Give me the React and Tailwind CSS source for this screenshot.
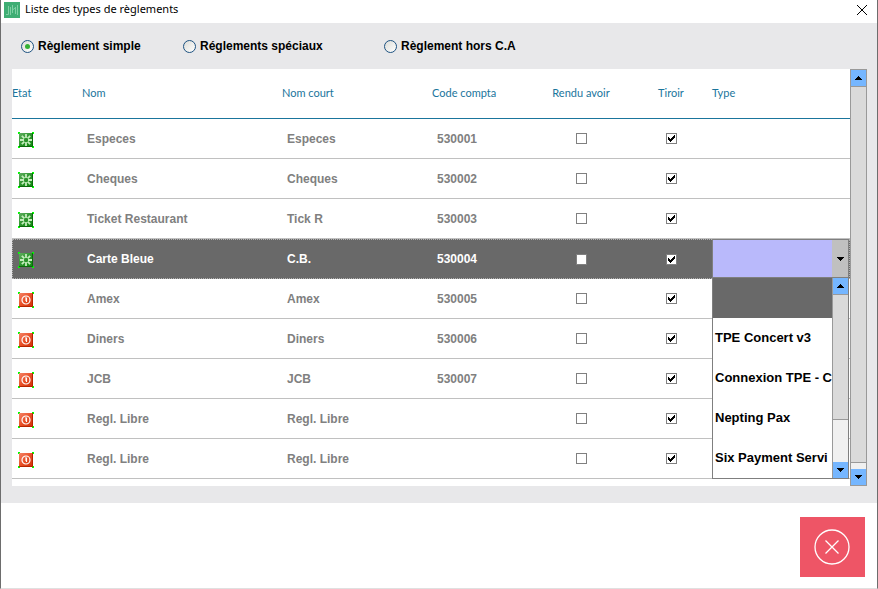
import React from "react";

const rows = [
  { on: true, name: "Especes", short: "Especes", code: "530001" },
  { on: true, name: "Cheques", short: "Cheques", code: "530002" },
  { on: true, name: "Ticket Restaurant", short: "Tick R", code: "530003" },
  { on: true, name: "Carte Bleue", short: "C.B.", code: "530004", selected: true },
  { on: false, name: "Amex", short: "Amex", code: "530005" },
  { on: false, name: "Diners", short: "Diners", code: "530006" },
  { on: false, name: "JCB", short: "JCB", code: "530007" },
  { on: false, name: "Regl. Libre", short: "Regl. Libre", code: "" },
  { on: false, name: "Regl. Libre", short: "Regl. Libre", code: "" },
];

const terminals = ["", "TPE Concert v3", "Connexion TPE - C", "Nepting Pax", "Six Payment Servi"];

function StateIcon({ on }) {
  return (
    <svg width="16" height="16" viewBox="0 0 16 16" role="img" aria-label={on ? "Actif" : "Inactif"} className="ml-1.5 mt-0.5 block">
      <defs>
        <linearGradient id="stateOn" x1="0" y1="0" x2="1" y2="1">
          <stop offset="0" stopColor="#5fae5f" />
          <stop offset="0.5" stopColor="#2c932c" />
          <stop offset="1" stopColor="#0e8a0e" />
        </linearGradient>
        <linearGradient id="stateOff" x1="0" y1="0" x2="1" y2="1">
          <stop offset="0" stopColor="#f58468" />
          <stop offset="0.5" stopColor="#e84e26" />
          <stop offset="1" stopColor="#cc2e05" />
        </linearGradient>
      </defs>
      <rect x="1" y="1" width="14" height="14" fill={on ? "url(#stateOn)" : "url(#stateOff)"} />
      <path d="M1 14.5H14.5V1" fill="none" stroke={on ? "#0a6b0a" : "#b82600"} />
      {on ? (
        <g stroke="#c4ecbc" strokeWidth="1.8">
          <path d="M8 2V6M8 10V14M2 8H6M10 8H14M3.800 3.800L6.400 6.400M9.600 9.600L12.200 12.200M12.200 3.800L9.600 6.400M6.400 9.600L3.800 12.200" />
        </g>
      ) : (
        <g fill="none" stroke="#fff">
          <circle cx="8" cy="8" r="4" strokeWidth="1.2" />
          <path d="M7 6H8.500V10M7 8H8.500" strokeWidth="1.2" />
        </g>
      )}
      <path
        d="M0 0H2V1H1V2H0ZM14 0H16V2H15V1H14ZM0 14H1V15H2V16H0ZM15 14H16V16H14V15H15Z"
        fill="#00ff00"
        shapeRendering="crispEdges"
      />
    </svg>
  );
}

function Tick({ label, checked }) {
  return (
    <span className="relative mx-auto block size-[11px]">
      <input
        type="checkbox"
        aria-label={label}
        defaultChecked={checked}
        className="peer block size-[11px] appearance-none border border-[#808080] bg-white"
      />
      <svg viewBox="0 0 11 11" shapeRendering="crispEdges" className="pointer-events-none absolute inset-0 hidden size-[11px] peer-checked:block">
        <path d="M2 4H3V5H4V6H5V5H6V4H7V3H8V2H9V5H8V6H7V7H6V8H5V9H4V8H3V7H2Z" fill="#000" />
      </svg>
    </span>
  );
}

function Arrow({ down }) {
  return (
    <svg width="7" height="4" viewBox="0 0 7 4" shapeRendering="crispEdges" aria-hidden="true">
      <path d={down ? "M0 0H7V1H6V2H5V3H4V4H3V3H2V2H1V1H0Z" : "M3 0H4V1H5V2H6V3H7V4H0V3H1V2H2V1H3Z"} fill="#000" />
    </svg>
  );
}

function Radio({ label, checked, className }) {
  return (
    <label className={"flex items-center gap-1 whitespace-nowrap " + className}>
      <input
        type="radio"
        name="category"
        defaultChecked={checked}
        className="grid size-[13px] shrink-0 appearance-none place-items-center rounded-full border border-[#1d5281] bg-linear-to-br from-[#dcdcd7] to-white before:hidden before:size-[5px] before:rounded-full before:bg-[#34b034] checked:before:block"
      />
      {label}
    </label>
  );
}

function TypePicker() {
  return (
    <div className="relative z-10 h-[39px] w-[137px] border border-[#7f7f7f]">
      <select aria-label="Type" className="block h-full w-full appearance-none bg-[#b9b9fb]">
        {terminals.map((t) => (
          <option key={t}>{t}</option>
        ))}
      </select>
      <span className="pointer-events-none absolute inset-y-0 right-0 flex w-4 items-center justify-center bg-[#c0c0c0]">
        <Arrow down />
      </span>
      <div className="absolute -left-px top-full z-10 flex h-[202px] w-[137px] border border-[#7f7f7f] bg-white text-[13px] text-black">
        <ul role="listbox" aria-label="Type" className="min-w-0 flex-1 overflow-hidden">
          {terminals.map((t, i) => (
            <li
              key={t}
              role="option"
              aria-selected={i === 0}
              className="flex h-10 items-center whitespace-nowrap pl-0.5 aria-selected:bg-[#696969]"
            >
              {t}
            </li>
          ))}
        </ul>
        <div className="flex w-4 flex-col border-l border-[#999] bg-[#f0f0f0]">
          <button aria-label="Monter" className="flex h-4 shrink-0 items-center justify-center bg-[#75b6ff]">
            <Arrow />
          </button>
          <div className="h-[126px] border-y border-[#999] bg-[#dadada]" />
          <div className="flex-1" />
          <button aria-label="Descendre" className="flex h-4 shrink-0 items-center justify-center bg-[#75b6ff]">
            <Arrow down />
          </button>
        </div>
      </div>
    </div>
  );
}

export default function App() {
  return (
    <div className="flex min-h-screen flex-col border-x border-b border-x-[#6d6d6d] border-b-[#e0e0e0] bg-white font-['Liberation_Sans',Arial,sans-serif]">
      <header className="flex h-[23px] items-center pl-[3px] pr-[9px] pb-1">
        <svg width="16" height="16" viewBox="0 0 16 16" aria-hidden="true" className="mt-px">
          <rect width="16" height="16" fill="#3fae74" />
          <path d="M2 12.5H4.5V4M6.5 13V5M8.500 11V3M8.500 8L11 6M11.500 12V5M13.500 13V3" fill="none" stroke="#7fd0a4" />
        </svg>
        <h1 className="ml-[5px] flex-1 font-['Noto_Sans',sans-serif] text-[11px] text-black">Liste des types de règlements</h1>
        <button aria-label="Fermer">
          <svg width="12" height="12" viewBox="0 0 12 12" stroke="#000">
            <path d="M1 1L11 11M11 1L1 11" />
          </svg>
        </button>
      </header>

      <main className="bg-[#e8e8ea] pb-[17px] pl-[11px] pr-2.5">
        <fieldset className="flex h-[46px] items-center pl-[9px] text-[12px] font-bold text-black">
          <Radio label="Règlement simple" checked className="w-[162px]" />
          <Radio label="Réglements spéciaux" className="w-[201px]" />
          <Radio label="Règlement hors C.A" className="" />
        </fieldset>

        <div className="flex">
          <div className="min-w-0 flex-1 bg-white pb-[7px]">
            <table className="w-full table-fixed border-separate border-spacing-0 text-left text-[12px] font-bold text-[#808080]">
              <colgroup>
                <col className="w-[70px]" />
                <col className="w-[200px]" />
                <col className="w-[150px]" />
                <col className="w-[99px]" />
                <col className="w-[100px]" />
                <col className="w-20" />
                <col />
              </colgroup>
              <thead>
                <tr className="h-[50px] font-['Lato',sans-serif] text-[11px] text-[#1a759c] *:border-b *:border-[#1a759c] *:p-0 *:font-normal">
                  <th>Etat</th>
                  <th>Nom</th>
                  <th>Nom court</th>
                  <th>Code compta</th>
                  <th className="text-center">Rendu avoir</th>
                  <th className="text-center">Tiroir</th>
                  <th className="pl-px!">Type</th>
                </tr>
              </thead>
              <tbody>
                {rows.map((r, i) => (
                  <tr
                    key={i}
                    className={
                      r.selected
                        ? "h-10 bg-[#696969] text-white outline-1 -outline-offset-1 outline-dotted outline-[#b0b0b0] *:p-0"
                        : "h-10 *:border-b *:border-[#c0c0c0] *:p-0"
                    }
                  >
                    <td>
                      <StateIcon on={r.on} />
                    </td>
                    <td>
                      <span className="pl-[5px]">{r.name}</span>
                    </td>
                    <td>
                      <span className="pl-[5px]">{r.short}</span>
                    </td>
                    <td>
                      <span className="pl-[5px]">{r.code}</span>
                    </td>
                    <td>
                      <Tick label={"Rendu avoir " + r.name} />
                    </td>
                    <td>
                      <Tick label={"Tiroir " + r.name} checked />
                    </td>
                    <td className="pl-px! align-top">{r.selected && <TypePicker />}</td>
                  </tr>
                ))}
              </tbody>
            </table>
          </div>
          <div className="flex w-[17px] flex-col border border-[#999] bg-[#f0f0f0]">
            <button aria-label="Défiler vers le haut" className="flex h-4 shrink-0 items-center justify-center bg-[#75b6ff]">
              <Arrow />
            </button>
            <div className="flex-1 border-y border-[#999] bg-[#dadada]" />
            <div className="h-1.5" />
            <button aria-label="Défiler vers le bas" className="flex h-4 shrink-0 items-center justify-center bg-[#75b6ff]">
              <Arrow down />
            </button>
          </div>
        </div>
      </main>

      <footer className="flex flex-1 justify-end pb-[11px] pr-3 pt-3.5">
        <button aria-label="Quitter" className="flex h-[60px] w-[65px] items-center justify-center bg-[#ee5566] pr-0.5">
          <svg width="36" height="36" viewBox="0 0 36 36" fill="none" stroke="#fff" strokeWidth="1.3">
            <circle cx="18" cy="18" r="17" />
            <path d="M11.500 11.500L24.500 24.500M24.500 11.500L11.500 24.500" />
          </svg>
        </button>
      </footer>
    </div>
  );
}
